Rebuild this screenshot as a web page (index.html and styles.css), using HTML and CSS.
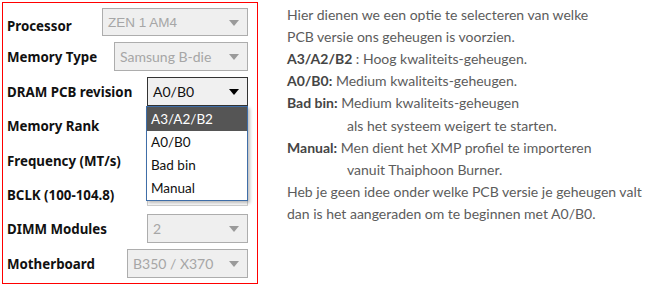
FILE: index.html
```html
<!DOCTYPE html>
<html>
<head>
<meta charset="utf-8">
<link rel="stylesheet" href="styles.css">
</head>
<body>
<div class="page">
  <div class="panel">
    <div class="row first">
      <span class="label">Processor</span>
      <div class="sel dis w-proc"><span class="val arial">ZEN 1 AM4</span><i class="arrow"></i></div>
    </div>
    <div class="row">
      <span class="label">Memory Type</span>
      <div class="sel dis w-type"><span class="val">Samsung B-die</span><i class="arrow"></i></div>
    </div>
    <div class="row dram">
      <span class="label">DRAM PCB revision</span>
      <div class="sel act w-small"><span class="val">A0/B0</span><i class="arrow"></i></div>
      <ul class="dropdown">
        <li class="hl">A3/A2/B2</li>
        <li>A0/B0</li>
        <li>Bad bin</li>
        <li>Manual</li>
      </ul>
    </div>
    <div class="row">
      <span class="label">Memory Rank</span>
      <div class="sel dis w-small"><span class="val"></span><i class="arrow"></i></div>
    </div>
    <div class="row">
      <span class="label">Frequency (MT/s)</span>
      <div class="sel dis w-small"><span class="val"></span><i class="arrow"></i></div>
    </div>
    <div class="row">
      <span class="label">BCLK (100-104.8)</span>
      <div class="inp w-small"><span class="val">100</span></div>
    </div>
    <div class="row">
      <span class="label">DIMM Modules</span>
      <div class="sel dis w-small"><span class="val">2</span><i class="arrow"></i></div>
    </div>
    <div class="row">
      <span class="label">Motherboard</span>
      <div class="sel dis w-mb"><span class="val">B350 / X370</span><i class="arrow"></i></div>
    </div>
  </div>
  <div class="info">
    <div class="line">Hier dienen we een optie te selecteren van welke</div>
    <div class="line">PCB versie ons geheugen is voorzien.</div>
    <div class="line"><b>A3/A2/B2</b> : Hoog kwaliteits-geheugen.</div>
    <div class="line"><b>A0/B0:</b> Medium kwaliteits-geheugen.</div>
    <div class="line"><b>Bad bin:</b> Medium kwaliteits-geheugen</div>
    <div class="line indent">als het systeem weigert te starten.</div>
    <div class="line"><b>Manual:</b> Men dient het XMP profiel te importeren</div>
    <div class="line indent">vanuit Thaiphoon Burner.</div>
    <div class="line">Heb je geen idee onder welke PCB versie je geheugen valt</div>
    <div class="line">dan is het aangeraden om te beginnen met A0/B0.</div>
  </div>
</div>
</body>
</html>
```

FILE: styles.css
```css
html, body {
  margin: 0;
  padding: 0;
  background: #ffffff;
}
body {
  padding: 2px;
  font-family: Lato, "Open Sans", sans-serif;
}
.page {
  display: flex;
  align-items: flex-start;
}
.panel {
  border: 1px solid #ff0000;
  padding: 5px 9px 0 4px;
  width: 241px;
  height: 275px;
  display: flex;
  flex-direction: column;
  gap: 5.4px;
}
.row {
  position: relative;
  height: 29px;
  display: flex;
  align-items: center;
  justify-content: space-between;
}
.label {
  font-family: "Noto Sans", "Open Sans", sans-serif;
  font-weight: 700;
  font-size: 13.3px;
  color: #111;
  padding-top: 1px;
}
.first .label {
  padding-top: 6px;
}
.sel, .inp {
  height: 29px;
  box-sizing: border-box;
  display: flex;
  align-items: center;
  justify-content: space-between;
  padding: 0 8px 0 5px;
  background: #efefef;
  border: 1px solid #adadad;
}
.first .sel {
  height: 28px;
  align-self: flex-start;
}
.w-proc { width: 146px; }
.w-type { width: 134px; }
.w-small { width: 101px; }
.w-mb { width: 121px; }
.val {
  font-size: 14px;
  color: #a6a6a6;
  white-space: nowrap;
}
.val.arial {
  font-family: "Liberation Sans", Arial, sans-serif;
  font-size: 13.5px;
}
.arrow {
  width: 0;
  height: 0;
  border-left: 5.5px solid transparent;
  border-right: 5.5px solid transparent;
  border-top: 6px solid #9a9a9a;
  margin-top: 1px;
}
.act {
  border-color: #333333;
  background: #f0f0f0;
}
.act .val {
  color: #111;
}
.act .arrow {
  border-top-color: #000;
}
.inp {
  background: #fafafa;
  border-color: #cfcfcf;
  height: 24px;
}
.dropdown {
  position: absolute;
  right: 0;
  top: 29px;
  width: 102px;
  margin: 0;
  padding: 0;
  list-style: none;
  background: #ffffff;
  border: 1px solid #3f6ea8;
  box-sizing: border-box;
  box-shadow: 2px 2px 3px rgba(0,0,0,0.25);
  z-index: 5;
}
.dropdown li {
  height: 23px;
  line-height: 23px;
  padding-left: 4px;
  font-size: 13.5px;
  color: #111;
}
.dropdown li.hl {
  height: 24px;
  line-height: 24px;
  background: #555555;
  color: #ffffff;
}
.info {
  margin-left: 29px;
  padding-top: 1.5px;
  font-size: 14px;
  color: #5c5c5c;
}
.line {
  line-height: 22.2px;
  white-space: nowrap;
}
.line b {
  color: #454545;
  font-weight: 700;
}
.indent {
  padding-left: 60px;
}
```
